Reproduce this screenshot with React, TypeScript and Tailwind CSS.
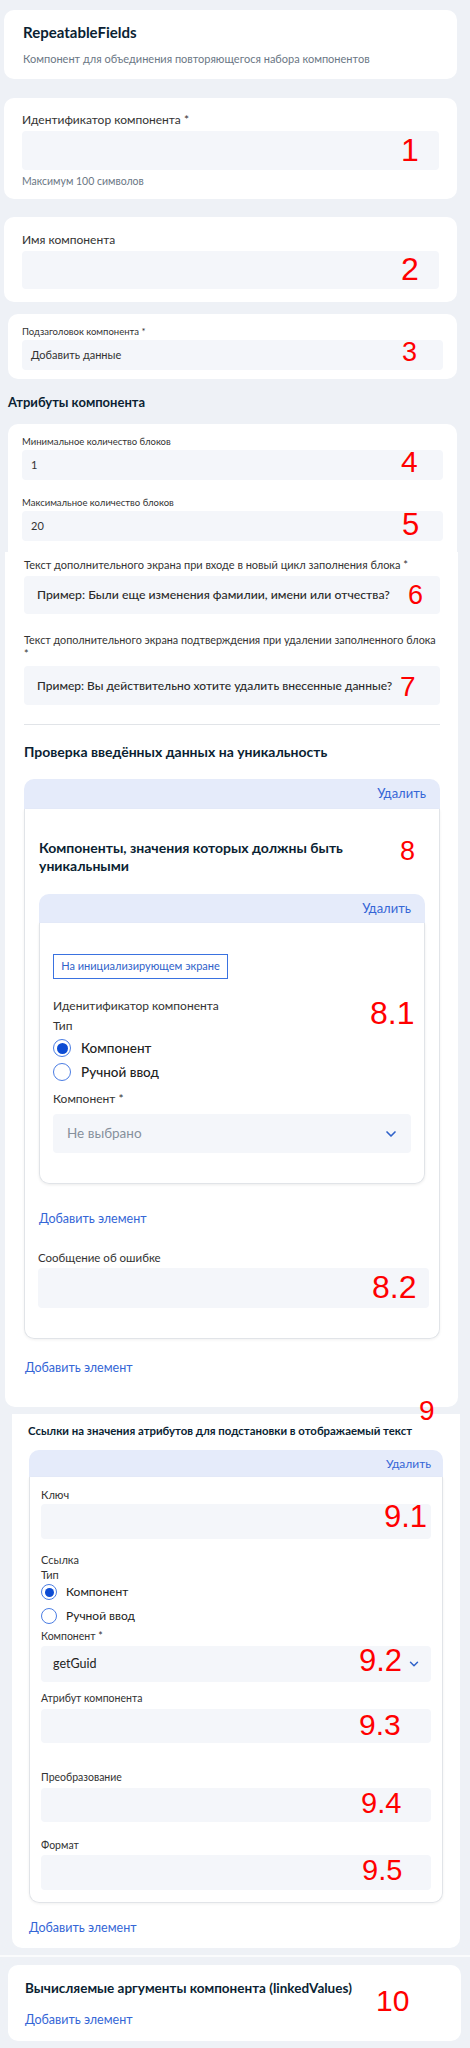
import { ChevronDown } from 'lucide-react';

const marks = [
  { t: '1', x: 401, y: 134, s: 32 },
  { t: '2', x: 401, y: 253, s: 32 },
  { t: '3', x: 402, y: 339, s: 27 },
  { t: '4', x: 401, y: 447, s: 30 },
  { t: '5', x: 402, y: 509, s: 31 },
  { t: '6', x: 408, y: 582, s: 27 },
  { t: '7', x: 400, y: 673, s: 28 },
  { t: '8', x: 400, y: 838, s: 27 },
  { t: '8.1', x: 370, y: 997, s: 32 },
  { t: '8.2', x: 372, y: 1271, s: 32 },
  { t: '9', x: 419, y: 1397, s: 28 },
  { t: '9.1', x: 384, y: 1501, s: 31 },
  { t: '9.2', x: 359, y: 1645, s: 31 },
  { t: '9.3', x: 359, y: 1710, s: 30 },
  { t: '9.4', x: 361, y: 1789, s: 29 },
  { t: '9.5', x: 362, y: 1856, s: 29 },
  { t: '10', x: 376, y: 1986, s: 30 },
];

function Radio({ on, size }: { on?: boolean; size: number }) {
  return (
    <span
      className="flex shrink-0 items-center justify-center rounded-full border-[1.5px] border-[#4b7de3] bg-white"
      style={{ width: size, height: size }}
    >
      {on && <span className="rounded-full bg-[#0d4cd3]" style={{ width: size - 7, height: size - 7 }} />}
    </span>
  );
}

function BoxHead({ h, pr, size }: { h: string; pr: string; size: string }) {
  return (
    <div className={`flex items-center justify-end rounded-t-[10px] bg-[#e5ebfa] text-[#3566d6] ${h} ${pr} ${size}`}>
      Удалить
    </div>
  );
}

export default function App() {
  return (
    <div className="relative flex min-h-[2048px] w-[470px] flex-col bg-[#eef1f6] pb-2 font-['Lato','Noto_Sans',sans-serif] text-[#333]">
      {/* 1 */}
      <div className="ml-[4px] mt-[10px] h-[69px] w-[453px] rounded-[10px] bg-white px-[19px] pt-[12px]">
        <div className="text-[15px] font-bold leading-[20px] text-[#0b1f33]">RepeatableFields</div>
        <div className="mt-[9px] text-[11px] leading-[16px] text-[#6b7785]">
          Компонент для объединения повторяющегося набора компонентов
        </div>
      </div>

      <div className="ml-[4px] mt-[19px] h-[101px] w-[453px] rounded-[10px] bg-white px-[18px] pt-[14px]">
        <div className="text-[12px] leading-[16px]">Идентификатор компонента *</div>
        <div className="mt-[3px] h-[39px] rounded-[4px] bg-[#f4f6fa]" />
        <div className="mt-[4px] text-[10.5px] leading-[14px] text-[#6b7785]">Максимум 100 символов</div>
      </div>

      <div className="ml-[4px] mt-[18px] h-[85px] w-[453px] rounded-[10px] bg-white px-[18px] pt-[15px]">
        <div className="text-[12px] leading-[16px]">Имя компонента</div>
        <div className="mt-[3px] h-[38px] rounded-[4px] bg-[#f4f6fa]" />
      </div>

      <div className="ml-[8px] mt-[12px] h-[65px] w-[449px] rounded-[10px] bg-white px-[14px] pt-[11px]">
        <div className="text-[9.5px] leading-[14px]">Подзаголовок компонента *</div>
        <div className="mt-[1px] flex h-[30px] items-center rounded-[4px] bg-[#f4f6fa] pl-[9px] text-[11px]">
          Добавить данные
        </div>
      </div>

      <div className="ml-[8px] mt-[14px] text-[13px] font-bold leading-[18px] text-[#0b1f33]">Атрибуты компонента</div>

      <div className="ml-[8px] mt-[13px] h-[128px] w-[449px] rounded-t-[10px] bg-white px-[14px] pt-[11px]">
        <div className="text-[9.5px] leading-[14px]">Минимальное количество блоков</div>
        <div className="mt-[1px] flex h-[30px] items-center rounded-[4px] bg-[#f4f6fa] pl-[9px] text-[11px]">1</div>
        <div className="mt-[16px] text-[9.5px] leading-[14px]">Максимальное количество блоков</div>
        <div className="mt-[1px] flex h-[30px] items-center rounded-[4px] bg-[#f4f6fa] pl-[9px] text-[11px]">20</div>
      </div>

      {/* 6 - 8 */}
      <div className="ml-[5px] w-[453px] rounded-b-[10px] bg-white pb-[31px] pl-[19px] pr-[18px] pt-[6px]">
        <div className="text-[11px] leading-[14px]">
          Текст дополнительного экрана при входе в новый цикл заполнения блока *
        </div>
        <div className="mt-[4px] flex h-[38px] items-center rounded-[4px] bg-[#f4f6fa] pl-[13px] text-[12.25px] font-medium text-[#2b2b2b]">
          Пример: Были еще изменения фамилии, имени или отчества?
        </div>
        <div className="mt-[19px] whitespace-nowrap text-[10.8px] leading-[14px]">
          Текст дополнительного экрана подтверждения при удалении заполненного блока
          <br />*
        </div>
        <div className="mt-[5px] flex h-[39px] items-center rounded-[4px] bg-[#f4f6fa] pl-[13px] text-[12px] font-medium text-[#2b2b2b]">
          Пример: Вы действительно хотите удалить внесенные данные?
        </div>
        <div className="mt-[19px] h-px bg-[#e1e4e8]" />
        <div className="mt-[18px] text-[14px] font-bold leading-[18px] text-[#0b1f33]">
          Проверка введённых данных на уникальность
        </div>

        <div className="mt-[18px]">
          <BoxHead h="h-[30px]" pr="pr-[14px]" size="text-[13px]" />
          <div className="rounded-b-[10px] border-x border-b border-[#e1e4e8] px-[14px] pb-[30px] pt-[30px] shadow-[0_1px_3px_rgba(0,0,0,0.06)]">
            <div className="pr-[40px] text-[14px] font-bold leading-[18px] text-[#0b1f33]">
              Компоненты, значения которых должны быть уникальными
            </div>
            <div className="mt-[19px]">
              <BoxHead h="h-[29px]" pr="pr-[14px]" size="text-[13px]" />
              <div className="rounded-b-[10px] border-x border-b border-[#e1e4e8] px-[13px] pb-[30px] pt-[31px] shadow-[0_1px_3px_rgba(0,0,0,0.08)]">
                <div className="flex h-[25px] w-[175px] items-center justify-center whitespace-nowrap border-[1.5px] border-[#3a72e0] text-[11px] text-[#2f62c9]">
                  На инициализирующем экране
                </div>
                <div className="mt-[19px] text-[12px] leading-[16px]">Иденитификатор компонента</div>
                <div className="mt-[4px] text-[12px] leading-[16px]">Тип</div>
                <div className="mt-[2px] flex h-[24px] items-center gap-[10px]">
                  <Radio on size={18} />
                  <span className="text-[13.5px] font-medium text-[#222]">Компонент</span>
                </div>
                <div className="flex h-[24px] items-center gap-[10px]">
                  <Radio size={18} />
                  <span className="text-[13.5px] font-medium text-[#222]">Ручной ввод</span>
                </div>
                <div className="mt-[7px] text-[12px] leading-[16px]">Компонент *</div>
                <div className="mt-[7px] flex h-[39px] items-center justify-between rounded-[4px] bg-[#f4f6fa] pl-[14px] pr-[12px] text-[13.5px] text-[#86909c]">
                  Не выбрано
                  <ChevronDown size={16} strokeWidth={2.5} className="text-[#2f62c9]" />
                </div>
              </div>
            </div>
            <div className="mt-[27px] text-[12.5px] leading-[16px] text-[#3566d6]">Добавить элемент</div>
            <div className="-ml-px mt-[23px] text-[11.5px] leading-[16px]">Сообщение об ошибке</div>
            <div className="-ml-px mt-[2px] h-[40px] w-[391px] rounded-[4px] bg-[#f4f6fa]" />
          </div>
        </div>
        <div className="ml-px mt-[21px] text-[12.5px] leading-[16px] text-[#3566d6]">Добавить элемент</div>
      </div>

      {/* 9 */}
      <div className="ml-[12px] mt-[7px] w-[448px] rounded-b-[10px] bg-white pb-[12px] pt-[9px]">
        <div className="whitespace-nowrap pl-[16px] text-[11.4px] font-bold leading-[16px] text-[#0b1f33]">
          Ссылки на значения атрибутов для подстановки в отображаемый текст
        </div>
        <div className="ml-[17px] mt-[11px] w-[414px]">
          <BoxHead h="h-[27px]" pr="pr-[12px]" size="text-[12px]" />
          <div className="rounded-b-[10px] border-x border-b border-[#e1e4e8] px-[11px] pb-[12px] pt-[11px] shadow-[0_1px_3px_rgba(0,0,0,0.06)]">
            <div className="text-[11px] leading-[14px]">Ключ</div>
            <div className="mt-[2px] h-[35px] rounded-[4px] bg-[#f4f6fa]" />
            <div className="mt-[14px] text-[11px] leading-[14px]">Ссылка</div>
            <div className="mt-[2px] text-[11px] leading-[12px]">Тип</div>
            <div className="flex h-[22px] items-center gap-[9px]">
              <Radio on size={16} />
              <span className="text-[12px] text-[#222]">Компонент</span>
            </div>
            <div className="mt-[2px] flex h-[22px] items-center gap-[9px]">
              <Radio size={16} />
              <span className="text-[12px] text-[#222]">Ручной ввод</span>
            </div>
            <div className="mt-[2px] text-[10.5px] leading-[14px]">Компонент *</div>
            <div className="mt-[3px] flex h-[36px] items-center justify-between rounded-[4px] bg-[#f4f6fa] pl-[12px] pr-[10px] text-[12.5px] text-[#222]">
              getGuid
              <ChevronDown size={14} strokeWidth={2.5} className="text-[#2f62c9]" />
            </div>
            <div className="mt-[9px] text-[10.5px] leading-[14px]">Атрибут компонента</div>
            <div className="mt-[4px] h-[34px] rounded-[4px] bg-[#f4f6fa]" />
            <div className="mt-[27px] text-[10.5px] leading-[14px]">Преобразование</div>
            <div className="mt-[4px] h-[34px] rounded-[4px] bg-[#f4f6fa]" />
            <div className="mt-[16px] text-[10.5px] leading-[14px]">Формат</div>
            <div className="mt-[3px] h-[35px] rounded-[4px] bg-[#f4f6fa]" />
          </div>
        </div>
        <div className="ml-[17px] mt-[17px] text-[12.5px] leading-[16px] text-[#3566d6]">Добавить элемент</div>
      </div>

      <div className="mt-[7px] h-[2px] bg-white/70" />

      {/* 10 */}
      <div className="ml-[8px] mt-[8px] h-[76px] w-[453px] rounded-[10px] bg-white pl-[17px] pt-[14px]">
        <div className="text-[13.5px] font-bold leading-[18px] text-[#0b1f33]">
          Вычисляемые аргументы компонента (linkedValues)
        </div>
        <div className="mt-[15px] text-[12.5px] leading-[16px] text-[#3566d6]">Добавить элемент</div>
      </div>

      {marks.map((m) => (
        <span
          key={m.t}
          className="absolute font-['Liberation_Sans',Arial,sans-serif] leading-none text-[#ff0000]"
          style={{ left: m.x, top: m.y, fontSize: m.s }}
        >
          {m.t}
        </span>
      ))}
    </div>
  );
}
